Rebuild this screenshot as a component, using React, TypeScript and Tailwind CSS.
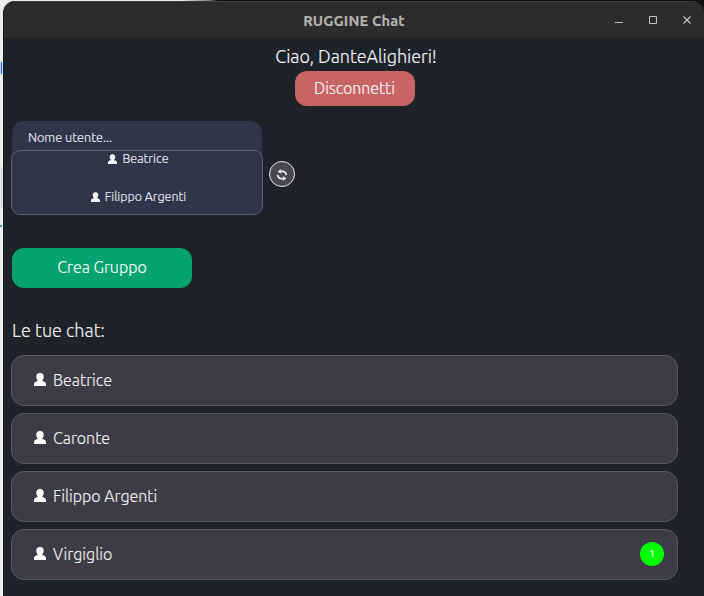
import React from 'react';

const chats = [
  { name: 'Beatrice', unread: 0 },
  { name: 'Caronte', unread: 0 },
  { name: 'Filippo Argenti', unread: 0 },
  { name: 'Virgiglio', unread: 1 },
];

function Person({ className }: { className: string }) {
  return (
    <svg viewBox="0 0 12 13" className={className} fill="currentColor">
      <path d="M6 0C8.6 0 9.7 1.4 9.7 3.8C9.7 5.5 9 6.6 8.3 7.4V8C10.7 8.5 12 9.4 12 11.4V13H0V11.4C0 9.4 1.3 8.5 3.7 8V7.4C3 6.6 2.3 5.5 2.3 3.8C2.3 1.4 3.4 0 6 0Z" />
    </svg>
  );
}

function TitleBar() {
  return (
    <header className="grid h-[38px] shrink-0 grid-cols-[1fr_110px_1fr] border-t border-b border-t-[#3d3d3d] border-b-[#1b1c1d] bg-[#2c2c2c]">
      <div />
      <h1 className="flex h-[38px] items-center justify-center text-[14.67px] leading-none font-bold tracking-[0.15px] whitespace-nowrap text-[#b4b2ae]">
        RUGGINE Chat
      </h1>
      <div className="flex h-[36px] items-center justify-end gap-[26px] pr-[13px] text-[#c2c2c2]">
        <svg width="8" height="10" viewBox="0 0 8 10"><path d="M0 7.5H8" stroke="currentColor" /></svg>
        <svg width="8" height="8" viewBox="0 0 8 8"><path d="M.5 .5H7.5V7.5H.5Z" fill="none" stroke="currentColor" /></svg>
        <svg width="8" height="8" viewBox="0 0 8 8"><path d="M.5 .5L7.5 7.5M7.5 .5L.5 7.5" stroke="currentColor" strokeWidth="1.3" /></svg>
      </div>
    </header>
  );
}

export default function App() {
  return (
    <div className="flex h-[596px] w-[704px] overflow-hidden bg-[linear-gradient(90deg,#ececec_0px,#ececec_180px,#777_210px,#111_217px,#111_100%)] pt-px font-['Ubuntu','Noto_Sans',sans-serif] font-light text-[#ededf0] [-webkit-text-stroke:0.15px_currentColor]">
      <aside className="w-[3px] shrink-0 overflow-hidden bg-[#ececec] pt-[61px]">
        <div className="h-[12px] w-[3px] border-l border-l-[#d9c9ef] bg-[linear-gradient(90deg,#2468d8_1px,#b9ecef_1px)]" />
        <div className="mt-[93px] h-[41px] bg-[#dce0e3]" />
        <div className="mt-[17px] h-[2px] w-[2px] bg-[#4b8eea]" />
      </aside>
      <main className="flex w-[701px] flex-col overflow-hidden rounded-t-[12px] border-l border-l-[#16191d] bg-[#1e2329]">
        <TitleBar />
        <section className="flex w-[701px] shrink-0 flex-col items-center pt-[4px]">
          <p className="flex h-[28px] items-center pb-[2px] pl-[3px] text-[18px] leading-none tracking-[-0.05px] whitespace-nowrap text-[#f2f2f8]">Ciao, DanteAlighieri!</p>
          <button className="flex h-[35px] w-[120px] items-center justify-center rounded-[12px] bg-[#c86464] pb-px text-[16px] leading-none tracking-[-0.05px] whitespace-nowrap text-[#fbf6f8]">
            Disconnetti
          </button>
        </section>
        <section className="mt-[15px] ml-[7px] flex shrink-0 items-start">
          <div className="w-[252px]">
            <div className="mx-px h-[34px] rounded-t-[12px] bg-[#303649] pt-[9px] pl-[16px] text-[12.7px] leading-[14px] text-[#ececf6]">
              Nome utente...
            </div>
            <div className="-mt-[5px] flex h-[65px] flex-col items-center gap-[22px] rounded-[9px] border border-[#5f606b] bg-[#303649] pl-[3px] text-[12.5px] leading-[16px] text-[#ececf6]">
              <div className="flex items-center gap-[5px]">
                <Person className="mb-px h-[10px] w-[9px] text-[#f4f4ff]" />
                <span className="-mt-px mb-px">Beatrice</span>
              </div>
              <div className="flex items-center gap-[5px]">
                <Person className="mb-px h-[10px] w-[9px] text-[#f4f4ff]" />
                <span className="-mt-px mb-px">Filippo Argenti</span>
              </div>
            </div>
          </div>
          <button className="mt-[40px] ml-[6px] flex size-[26px] items-center justify-center rounded-full border border-[#e7e7ea] bg-[#494753] pt-[2px] pr-px text-[#ededf4]">
            <svg width="12" height="12" viewBox="0 0 12 12" fill="none" stroke="currentColor" strokeWidth="1.7">
              <path d="M4 2.4H6.3C8.7 2.4 10 3.8 10.4 6.2" />
              <path d="M8 9.6H5.7C3.3 9.6 2 8.2 1.6 5.8" />
              <path d="M1.6 2.6L5 .2V4.8ZM10.4 9.4L7 11.8V7.2Z" fill="currentColor" stroke="none" />
            </svg>
          </button>
        </section>
        <button className="mt-[33px] ml-[8px] flex h-[40px] w-[180px] shrink-0 items-center justify-center rounded-[12px] bg-[#05a270] pb-[3px] text-[16px] leading-none whitespace-nowrap text-[#f3fbf8]">
          Crea Gruppo
        </button>
        <h2 className="mt-[32px] ml-[8px] h-[21px] shrink-0 text-[18px] leading-[20px]">Le tue chat:</h2>
        <ul className="mt-[14px] ml-[7px] flex w-[667px] shrink-0 flex-col gap-[7px]">
          {chats.map((chat) => (
            <li key={chat.name} className="flex h-[51px] items-center rounded-[13px] border border-[#5b5a64] bg-[#3d3b45] pr-[13px] pl-[22px]">
              <Person className="mb-[2px] h-[13px] w-[12px] text-white" />
              <span className="mb-[2px] ml-[7px] text-[16px] leading-[20px]">{chat.name}</span>
              {chat.unread > 0 && (
                <span className="mb-px ml-auto flex size-[24px] items-center justify-center rounded-full bg-[#00ff00] text-[10px] leading-none font-normal text-white">
                  {chat.unread}
                </span>
              )}
            </li>
          ))}
        </ul>
      </main>
    </div>
  );
}
